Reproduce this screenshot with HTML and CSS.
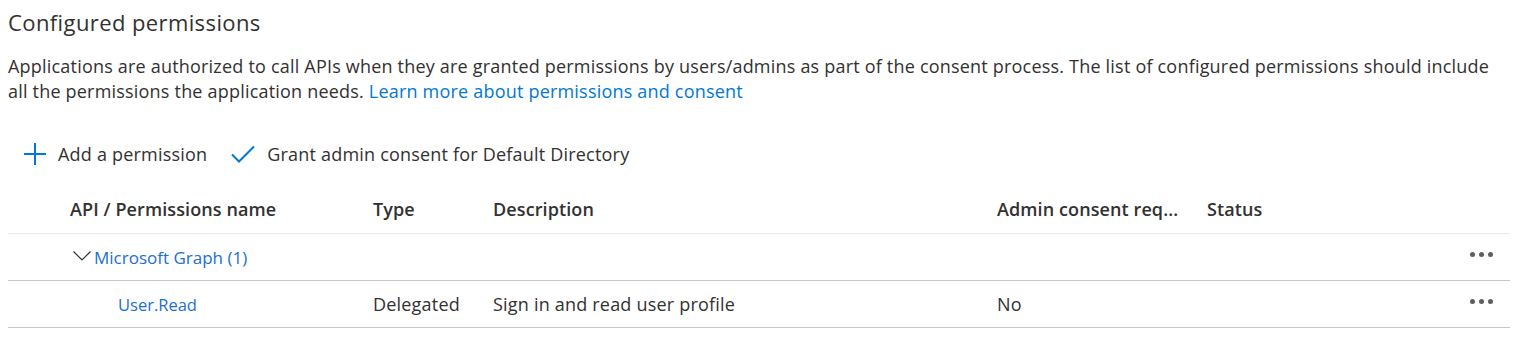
FILE: index.html
```html
<!DOCTYPE html>
<html lang="en">
<head>
<meta charset="utf-8">
<title>Configured permissions</title>
<link rel="stylesheet" href="styles.css">
</head>
<body>
<main class="page">
  <h2 class="title">Configured permissions</h2>
  <p class="intro">Applications are authorized to call APIs when they are granted permissions by users/admins as part of the consent process. The list of configured permissions should include all the permissions the application needs. <a class="link" href="#">Learn more about permissions and consent</a></p>

  <div class="toolbar">
    <button class="tool">
      <svg class="tool-icon plus" viewBox="0 0 22 22" width="22" height="22"><path d="M11 0V22M0 11H22" stroke="#0078d4" stroke-width="2" fill="none"/></svg>
      <span>Add a permission</span>
    </button>
    <button class="tool">
      <svg class="tool-icon check" viewBox="0 0 24 18" width="24" height="18"><path d="M1 9.5L8 16.5L23 1.5" stroke="#0078d4" stroke-width="2" fill="none"/></svg>
      <span>Grant admin consent for Default Directory</span>
    </button>
  </div>

  <div class="table">
    <div class="row head">
      <div>API / Permissions name</div>
      <div>Type</div>
      <div>Description</div>
      <div>Admin consent req...</div>
      <div>Status</div>
      <div></div>
    </div>
    <div class="row group">
      <div class="group-name">
        <svg class="chev" viewBox="0 0 18 10" width="18" height="10"><path d="M0.5 0.5L9 9L17.5 0.5" stroke="#323130" stroke-width="1.2" fill="none"/></svg>
        <a class="graph" href="#">Microsoft Graph (1)</a>
      </div>
      <div></div><div></div><div></div><div></div>
      <div class="more"><i></i><i></i><i></i></div>
    </div>
    <div class="row item">
      <div class="perm"><a class="graph perm-link" href="#">User.Read</a></div>
      <div>Delegated</div>
      <div>Sign in and read user profile</div>
      <div>No</div>
      <div></div>
      <div class="more"><i></i><i></i><i></i></div>
    </div>
  </div>
</main>
</body>
</html>
```

FILE: styles.css
```css
* { box-sizing: border-box; }
html, body { margin: 0; padding: 0; background: #ffffff; }
body {
  font-family: "Open Sans", "Noto Sans", "Liberation Sans", sans-serif;
  color: #323130;
  font-size: 18px;
  letter-spacing: 0.2px;
}
.page {
  padding: 6px 20px 0 8px;
}
.title {
  margin: 0;
  font-weight: 400;
  font-size: 22px;
  letter-spacing: 0.4px;
  line-height: 32px;
  color: #323130;
}
.intro {
  margin: 16px 0 0 0;
  font-size: 18px;
  line-height: 25px;
  color: #323130;
}
.link { color: #0078d4; text-decoration: none; }
.toolbar {
  display: flex;
  align-items: center;
  gap: 24px;
  margin-top: 36px;
  padding-left: 16px;
  height: 28px;
}
.tool {
  display: flex;
  align-items: center;
  gap: 12px;
  border: 0;
  background: none;
  padding: 0;
  font: inherit;
  letter-spacing: inherit;
  color: #323130;
  font-size: 18px;
}
.table { margin-top: 17px; }
.row {
  display: grid;
  grid-template-columns: 303px 120px 504px 210px 1fr 56px;
  padding-left: 62px;
  align-items: center;
  height: 47px;
  border-bottom: 1px solid #c8c6c4;
}
.row.head {
  height: 49px;
  font-weight: 600;
  letter-spacing: 0.1px;
  border-bottom-color: #edebe9;
}
.group-name {
  display: flex;
  align-items: center;
  gap: 3px;
  margin-left: 3px;
}
.chev { display: block; margin-top: -2px; }
.graph {
  color: #1a6ed4;
  text-decoration: none;
  font-size: 17px;
  letter-spacing: 0;
}
.perm-link { font-size: 16.5px; }
.perm { padding-left: 48px; }
.more {
  display: flex;
  gap: 4px;
  justify-content: flex-start;
  padding-left: 16px;
  margin-top: -5px;
}
.more i {
  display: block;
  width: 5px;
  height: 5px;
  border-radius: 50%;
  background: #605e5c;
}
```
